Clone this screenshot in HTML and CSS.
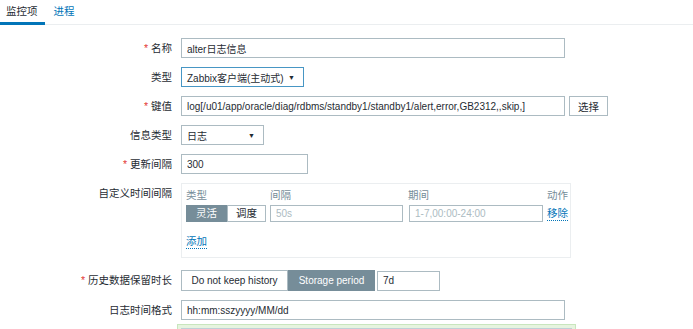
FILE: index.html
```html
<!DOCTYPE html>
<html lang="zh">
<head>
<meta charset="utf-8">
<title>监控项</title>
<link rel="stylesheet" href="styles.css">
</head>
<body>
<nav class="tabs">
  <a class="tab tab-active">监控项</a>
  <a class="tab">进程</a>
</nav>
<form class="form">
  <label class="label"><span class="req">*</span> 名称</label>
  <div class="field"><input class="input w-384" type="text" value="alter日志信息"></div>

  <label class="label">类型</label>
  <div class="field"><div class="select select-focus w-123"><span>Zabbix客户端(主动式)</span><span class="arrow">▼</span></div></div>

  <label class="label"><span class="req">*</span> 键值</label>
  <div class="field row">
    <input class="input w-384" type="text" value="log[/u01/app/oracle/diag/rdbms/standby1/standby1/alert,error,GB2312,,skip,]">
    <button class="btn" type="button">选择</button>
  </div>

  <label class="label">信息类型</label>
  <div class="field"><div class="select w-83"><span>日志</span><span class="arrow">▼</span></div></div>

  <label class="label"><span class="req">*</span> 更新间隔</label>
  <div class="field"><input class="input w-127" type="text" value="300"></div>

  <label class="label">自定义时间间隔</label>
  <div class="field">
    <div class="intervals">
      <div class="grid">
        <div class="th">类型</div>
        <div class="th">间隔</div>
        <div class="th">期间</div>
        <div class="th th-right">动作</div>
        <div class="seg">
          <span class="seg-btn seg-on">灵活</span><span class="seg-btn">调度</span>
        </div>
        <input class="input small w-133" type="text" placeholder="50s">
        <input class="input small w-134 ml1" type="text" placeholder="1-7,00:00-24:00">
        <a class="link">移除</a>
      </div>
      <a class="link add">添加</a>
    </div>
  </div>

  <label class="label"><span class="req">*</span> 历史数据保留时长</label>
  <div class="field row">
    <span class="hbtn hbtn-off">Do not keep history</span><span class="hbtn hbtn-on">Storage period</span>
    <input class="input w-63 ml2" type="text" value="7d">
  </div>

  <label class="label">日志时间格式</label>
  <div class="field"><input class="input w-384" type="text" value="hh:mm:sszyyyy/MM/dd"></div>

  <span class="label"></span>
  <div class="field"><div class="green"><div class="green-inner"></div></div></div>
</form>
</body>
</html>
```

FILE: styles.css
```css
html, body {
  margin: 0;
  padding: 0;
  background: #ffffff;
}
body {
  font-family: "Liberation Sans", "Noto Sans CJK SC", Arial, sans-serif;
  font-size: 10px;
  color: #1f2c33;
  overflow: hidden;
  white-space: nowrap;
}
.tabs {
  display: flex;
  height: 24px;
  border-bottom: 1px solid #ebeef0;
}
.tab {
  display: block;
  padding: 0 7px 0 6px;
  font-size: 10.5px;
  line-height: 23px;
  color: #0275b8;
  cursor: pointer;
}
.tab + .tab {
  padding-left: 9px;
}
.tab-active {
  color: #1f2c33;
  border-bottom: 3px solid #0275b8;
  line-height: 22px;
  height: 22px;
  margin-bottom: -1px;
}
.form {
  display: grid;
  grid-template-columns: 172px 1fr;
  column-gap: 9px;
  row-gap: 9px;
  padding-top: 13px;
}
.label {
  text-align: right;
  font-size: 10.5px;
  line-height: 20px;
}
.req {
  color: #e33734;
}
.field {
  min-height: 20px;
}
.row {
  display: flex;
  align-items: center;
}
.input {
  box-sizing: border-box;
  height: 20px;
  border: 1px solid #acbbc2;
  padding: 0 5px;
  font-family: inherit;
  font-size: 10px;
  color: #1f2c33;
  background: #fff;
  margin: 0;
  outline: none;
  display: block;
}
.input::placeholder {
  color: #acbbc2;
}
.w-384 { width: 384px; }
.w-134 { width: 134px; }
.w-133 { width: 133px; }
.w-127 { width: 127px; }
.w-123 { width: 123px; }
.w-83 { width: 83px; }
.w-63 { width: 63px; }
.ml2 { margin-left: 2px; }
.ml1 { margin-left: 1px; }
.select {
  box-sizing: border-box;
  height: 20px;
  border: 1px solid #acbbc2;
  padding: 0 5px;
  display: flex;
  align-items: center;
  justify-content: space-between;
  font-size: 10px;
  background: #fff;
}
.select-focus {
  border-color: #4796c4;
}
.arrow {
  font-size: 7px;
  color: #1f2c33;
  padding-right: 3px;
}
.btn {
  box-sizing: border-box;
  height: 20px;
  margin-left: 4px;
  padding: 0 8px;
  border: 1px solid #acbbc2;
  background: #fff;
  font-family: inherit;
  font-size: 10.5px;
  color: #1f2c33;
}
.intervals {
  box-sizing: border-box;
  width: 390px;
  height: 75px;
  border: 1px solid #ebeef0;
  padding: 2px 3px 0 4px;
  margin-bottom: 3px;
}
.grid {
  display: grid;
  grid-template-columns: 80px 134px 135px auto;
  column-gap: 4px;
  align-items: center;
}
.th {
  color: #768d99;
  font-size: 10.5px;
  line-height: 19px;
}
.th-right {
  text-align: right;
}
.seg {
  display: flex;
  height: 17px;
}
.seg-btn {
  box-sizing: border-box;
  width: 39px;
  height: 17px;
  line-height: 15px;
  text-align: center;
  border: 1px solid #acbbc2;
  font-size: 10.5px;
  background: #fff;
}
.seg-on {
  background: #768d99;
  border-color: #768d99;
  color: #fff;
  width: 41px;
}
.small {
  height: 17px;
}
.link {
  color: #0275b8;
  font-size: 10.5px;
  border-bottom: 1px dotted #0275b8;
  cursor: pointer;
  justify-self: end;
  line-height: 13px;
}
.add {
  display: inline-block;
  margin-top: 13px;
}
.hbtn {
  box-sizing: border-box;
  height: 21px;
  line-height: 19px;
  border: 1px solid #acbbc2;
  font-size: 10px;
  text-align: center;
}
.hbtn-off {
  width: 107px;
  background: #fff;
}
.hbtn-on {
  width: 87px;
  background: #768d99;
  border-color: #768d99;
  color: #fff;
}
.green {
  margin-left: -4px;
  margin-top: -5px;
  width: 391px;
  height: 20px;
  background: #e6f4df;
  border: 1px solid #c8e6bd;
  padding: 3px 3px 0 3px;
}
.green-inner {
  height: 20px;
  border: 1px solid #c0d0d6;
  background: #fff;
}
```
